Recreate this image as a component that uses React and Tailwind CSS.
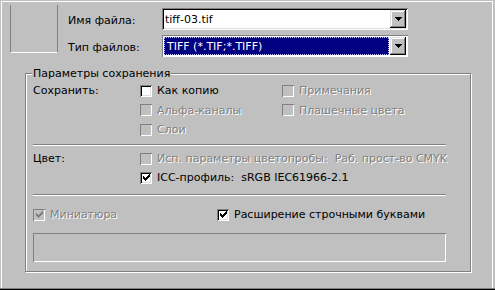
import React from 'react';

const sunken = 'shadow-[inset_1px_1px_0_#808080,inset_-1px_-1px_0_#ffffff,inset_2px_2px_0_#000000,inset_-2px_-2px_0_#dfdfdf]';
const raised = 'shadow-[inset_-1px_-1px_0_#000000,inset_1px_1px_0_#dfdfdf,inset_-2px_-2px_0_#808080,inset_2px_2px_0_#ffffff]';
const dim = 'text-[#808080] [text-shadow:1px_1px_0_#ffffff]';

const CHECK = ['......X', '.....XX', 'X...XXX', 'XX.XXX.', 'XXXXX..', '.XXX...', '..X....'];

function Check({ color }) {
  return (
    <svg width="7" height="7" viewBox="0 0 7 7" shapeRendering="crispEdges">
      {CHECK.map((row, y) =>
        row.split('').map((c, x) => (c === 'X' ? <rect key={x + '-' + y} x={x} y={y} width="1" height="1" fill={color} /> : null))
      )}
    </svg>
  );
}

function Box({ checked, disabled }) {
  return (
    <span
      className={
        disabled
          ? 'flex items-center justify-center w-[12px] h-[12px] shrink-0 bg-[#c0c0c0] shadow-[inset_1px_1px_0_#808080,inset_-1px_-1px_0_#ffffff]'
          : 'flex items-center justify-center w-[12px] h-[12px] shrink-0 bg-white ' + sunken
      }
    >
      {checked && <Check color={disabled ? '#808080' : '#000000'} />}
    </span>
  );
}

function Option({ label, checked, disabled, className = '' }) {
  return (
    <div className={'flex items-center gap-[5px] ' + className}>
      <Box checked={checked} disabled={disabled} />
      <span className={disabled ? dim : 'text-black'}>{label}</span>
    </div>
  );
}

function Arrow() {
  return (
    <svg width="7" height="4" viewBox="0 0 7 4" shapeRendering="crispEdges">
      <path d="M0 0h7v1h-1v1h-1v1h-1v1h-1v-1h-1v-1h-1v-1h-1z" fill="#000" />
    </svg>
  );
}

function Combo({ value, selected }) {
  return (
    <div
      className={
        selected
          ? 'w-[246px] h-[22px] flex p-[1px] bg-white shadow-[inset_1px_1px_0_#808080,inset_-1px_-1px_0_#ffffff]'
          : 'w-[246px] h-[22px] flex p-[2px] bg-white ' + sunken
      }
    >
      <div
        className={
          selected
            ? 'flex-1 m-[1px] mr-[1px] flex items-center pl-[2px] bg-[#000080] text-white border border-dotted border-[#c0c0ff]'
            : 'flex-1 flex items-center pl-[1px] text-black'
        }
      >
        {value}
      </div>
      <div className={'w-[16px] flex items-center justify-center bg-[#c0c0c0] ' + raised + (selected ? ' my-[1px] mr-[1px]' : '')}>
        <Arrow />
      </div>
    </div>
  );
}

export default function App() {
  return (
    <div className="w-[495px] h-[290px] bg-[#c0c0c0] overflow-hidden text-[11px] leading-none font-['DejaVu_Sans',sans-serif]">
      <div className="ml-[1px] mt-[1px] w-[492px] h-[287px] border-l border-t border-r border-white">
        {/* top: thumbnail + file fields */}
        <div className="h-[71px] flex items-start">
          <div className="ml-[8px] mt-[3px] w-[48px] h-[48px] border-l border-r border-b border-l-[#808080] border-r-[#808080] border-b-white" />
          <div className="ml-[10px] mt-[6px] flex flex-col gap-[5px]">
            <div className="flex items-center">
              <span className="w-[94px] pt-[2px]">Имя файла:</span>
              <Combo value="tiff-03.tif" />
            </div>
            <div className="flex items-center">
              <span className="w-[94px] pt-[2px]">Тип файлов:</span>
              <Combo value="TIFF (*.TIF;*.TIFF)" selected />
            </div>
          </div>
        </div>

        {/* group box */}
        <div className="relative ml-[23px] w-[446px] h-[199px] border border-[#808080] shadow-[inset_1px_1px_0_#ffffff,1px_1px_0_#ffffff] pl-[7px] pt-[7px]">
          <span className="absolute left-[6px] top-[-6px] px-[1px] bg-[#c0c0c0]">Параметры сохранения</span>

          <div className="flex">
            <span className="w-[107px] h-[19px] flex items-center">Сохранить:</span>
            <div className="flex flex-col">
              <div className="flex h-[19px]">
                <Option label="Как копию" className="w-[142px]" />
                <Option label="Примечания" disabled />
              </div>
              <div className="flex h-[20px]">
                <Option label="Альфа-каналы" disabled className="w-[142px]" />
                <Option label="Плашечные цвета" disabled />
              </div>
              <div className="flex h-[19px]">
                <Option label="Слои" disabled />
              </div>
            </div>
          </div>

          <div className="mt-[5px] w-[413px] h-[2px] border-t border-b border-t-[#808080] border-b-white" />

          <div className="mt-[3px] flex">
            <span className="w-[107px] h-[19px] flex items-center">Цвет:</span>
            <div className="flex flex-col">
              <Option label="Исп. параметры цветопробы:  Раб. прост-во CMYK" disabled className="h-[19px] whitespace-pre" />
              <Option label="ICC-профиль:  sRGB IEC61966-2.1" checked className="h-[19px] whitespace-pre" />
            </div>
          </div>

          <div className="mt-[7px] w-[413px] h-[2px] border-t border-b border-t-[#808080] border-b-white" />

          <div className="mt-[9px] flex h-[19px]">
            <Option label="Миниатюра" checked disabled className="w-[184px]" />
            <Option label="Расширение строчными буквами" checked />
          </div>

          <div className="mt-[9px] w-[413px] h-[29px] shadow-[inset_1px_1px_0_#808080,inset_-1px_-1px_0_#ffffff]" />
        </div>
      </div>
      <div className="h-[1px] bg-[#808080]" />
      <div className="h-[1px] bg-black" />
    </div>
  );
}
